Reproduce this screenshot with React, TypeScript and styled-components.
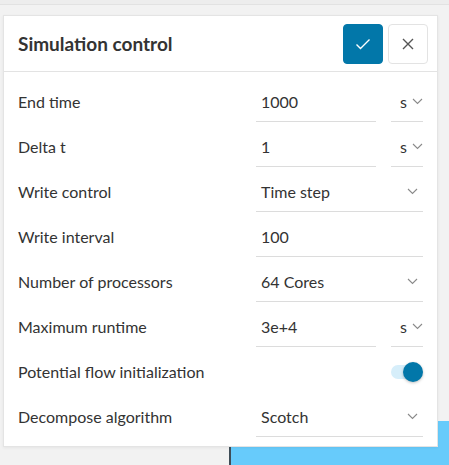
import * as React from 'react';
import styled, { createGlobalStyle } from 'styled-components';

const GlobalStyle = createGlobalStyle`
  html, body {
    margin: 0;
    padding: 0;
    background: #f2f2f2;
    font-family: Lato, "Noto Sans", sans-serif;
    color: #333;
  }
`;

const Page = styled.div`
  position: relative;
  width: 449px;
  height: 465px;
  overflow: hidden;
  background: #f2f2f2;
`;

const TopStrip = styled.div`
  height: 4px;
  background: #ededed;
  border-bottom: 1px solid #e2e2e2;
`;

const Viewport = styled.div`
  position: absolute;
  left: 229px;
  top: 421px;
  right: 0;
  bottom: 0;
  background: #67cbfb;
  border-left: 2px solid #3f4d57;
`;

const Panel = styled.div`
  position: absolute;
  left: 3px;
  top: 15px;
  width: 435px;
  box-sizing: border-box;
  background: #fff;
  border: 1px solid #e4e4e4;
  box-shadow: 0 1px 3px rgba(0, 0, 0, 0.06);
`;

const Header = styled.div`
  display: flex;
  align-items: center;
  justify-content: space-between;
  height: 55px;
  padding: 0 9px 0 14px;
  border-bottom: 1px solid #e3e3e3;
`;

const Title = styled.h2`
  margin: 0;
  font-size: 19px;
  font-weight: 700;
  color: #333;
`;

const Actions = styled.div`
  display: flex;
  gap: 5px;
`;

const IconButton = styled.button<{ $primary?: boolean }>`
  width: 40px;
  height: 40px;
  display: flex;
  align-items: center;
  justify-content: center;
  padding: 0;
  border-radius: 4px;
  cursor: pointer;
  background: ${(p) => (p.$primary ? '#0277a9' : '#fff')};
  border: 1px solid ${(p) => (p.$primary ? '#0277a9' : '#e3e3e3')};
`;

const Body = styled.div`
  padding: 7px 14px 7px 14px;
`;

const Row = styled.div`
  display: grid;
  grid-template-columns: 238px 1fr;
  align-items: center;
  height: 45px;
`;

const Label = styled.span`
  font-size: 16px;
  color: #333;
`;

const Fields = styled.div`
  display: flex;
  align-items: center;
  gap: 15px;
  height: 40px;
`;

const Field = styled.div<{ $grow?: boolean; $width?: number }>`
  display: flex;
  align-items: center;
  justify-content: space-between;
  box-sizing: border-box;
  height: 40px;
  padding: 0 5px;
  border-bottom: 1px solid #dcdcdc;
  font-size: 16px;
  color: #333;
  ${(p) => (p.$grow ? 'flex: 1;' : '')}
  ${(p) => (p.$width ? `width: ${p.$width}px;` : '')}
`;

const UnitField = styled(Field)`
  padding: 0 0 0 2px;
  gap: 5px;
  justify-content: flex-end;
`;

const ToggleWrap = styled.div`
  display: flex;
  justify-content: flex-end;
  align-items: center;
  height: 40px;
`;

const Track = styled.div`
  position: relative;
  width: 26px;
  height: 14px;
  border-radius: 7px;
  background: #d6eefa;
  margin-right: 6px;
`;

const Knob = styled.div`
  position: absolute;
  right: -6px;
  top: -3px;
  width: 20px;
  height: 20px;
  border-radius: 50%;
  background: #0277a9;
  box-shadow: 0 1px 3px rgba(0, 0, 0, 0.25);
`;

const Chevron = () => (
  <svg width="11" height="7" viewBox="0 0 11 7" fill="none">
    <path d="M1 1l4.5 4.5L10 1" stroke="#8a8a8a" strokeWidth="1.1" />
  </svg>
);

type RowDef = {
  label: string;
  value?: string;
  unit?: string;
  select?: boolean;
  toggle?: boolean;
};

const rows: RowDef[] = [
  { label: 'End time', value: '1000', unit: 's' },
  { label: 'Delta t', value: '1', unit: 's' },
  { label: 'Write control', value: 'Time step', select: true },
  { label: 'Write interval', value: '100' },
  { label: 'Number of processors', value: '64 Cores', select: true },
  { label: 'Maximum runtime', value: '3e+4', unit: 's' },
  { label: 'Potential flow initialization', toggle: true },
  { label: 'Decompose algorithm', value: 'Scotch', select: true },
];

function Control({ row }: { row: RowDef }) {
  if (row.toggle) {
    return (
      <ToggleWrap>
        <Track>
          <Knob />
        </Track>
      </ToggleWrap>
    );
  }
  return (
    <Fields>
      <Field $grow>
        <span>{row.value}</span>
        {row.select && <Chevron />}
      </Field>
      {row.unit && (
        <UnitField $width={32}>
          <span>{row.unit}</span>
          <Chevron />
        </UnitField>
      )}
    </Fields>
  );
}

export default function App() {
  return (
    <Page>
      <GlobalStyle />
      <TopStrip />
      <Viewport />
      <Panel>
        <Header>
          <Title>Simulation control</Title>
          <Actions>
            <IconButton $primary aria-label="Apply">
              <svg width="16" height="12" viewBox="0 0 16 12" fill="none">
                <path d="M1.5 6.5l4 4L14.5 1.5" stroke="#fff" strokeWidth="1.4" />
              </svg>
            </IconButton>
            <IconButton aria-label="Close">
              <svg width="12" height="12" viewBox="0 0 12 12" fill="none">
                <path d="M1 1l10 10M11 1L1 11" stroke="#555" strokeWidth="1.4" />
              </svg>
            </IconButton>
          </Actions>
        </Header>
        <Body>
          {rows.map((r) => (
            <Row key={r.label}>
              <Label>{r.label}</Label>
              <Control row={r} />
            </Row>
          ))}
        </Body>
      </Panel>
    </Page>
  );
}
